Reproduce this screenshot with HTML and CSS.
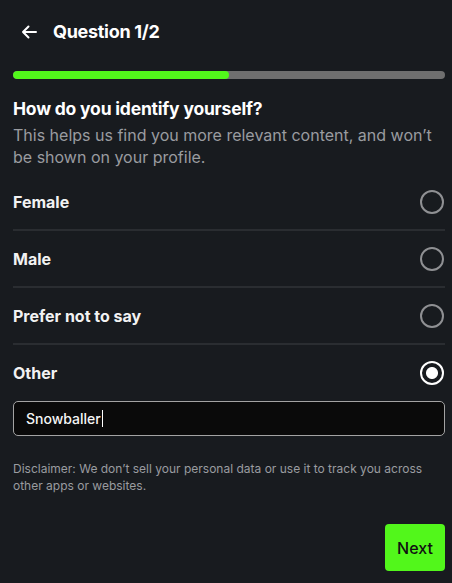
FILE: index.html
```html
<!DOCTYPE html>
<html>
<head>
<meta charset="utf-8">
<link rel="stylesheet" href="styles.css">
</head>
<body>
<div class="page">
  <header class="topbar">
    <svg class="back" width="16" height="14" viewBox="0 0 16 14"><path d="M15 7H2M7.5 1.5L2 7l5.5 5.5" fill="none" stroke="#fff" stroke-width="2" stroke-linecap="round" stroke-linejoin="round"/></svg>
    <h1 class="topbar-title">Question 1/2</h1>
  </header>
  <div class="progress"><div class="progress-fill" style="width:50%"></div></div>
  <h2 class="question">How do you identify yourself?</h2>
  <p class="hint">This helps us find you more relevant content, and won’t be shown on your profile.</p>
  <ul class="options">
    <li class="option"><span>Female</span><span class="radio"></span></li>
    <li class="option"><span>Male</span><span class="radio"></span></li>
    <li class="option"><span>Prefer not to say</span><span class="radio"></span></li>
    <li class="option last"><span>Other</span><span class="radio checked"></span></li>
  </ul>
  <div class="input"><span>Snowballer</span><span class="caret"></span></div>
  <p class="disclaimer">Disclaimer: We don’t sell your personal data or use it to track you across other apps or websites.</p>
  <div class="actions"><button class="next">Next</button></div>
</div>
</body>
</html>
```
FILE: styles.css
```css
* { box-sizing: border-box; }
html, body { margin: 0; padding: 0; }
body {
  background: #181b1f;
  color: #fff;
  font-family: Inter, "Noto Sans", sans-serif;
  width: 452px;
  height: 583px;
  overflow: hidden;
}
.page { padding: 0 7px 0 13px; display: flex; flex-direction: column; }
.topbar { height: 63px; display: flex; align-items: center; gap: 16px; padding-left: 8px; }
.back { display: block; }
.topbar-title { margin: 0; font-size: 18px; font-weight: 700; letter-spacing: -0.3px; }
.progress { height: 8px; background: #6f6f6f; border-radius: 4px; margin-top: 8px; overflow: hidden; }
.progress-fill { height: 100%; background: #52f71b; border-radius: 4px; }
.question { margin: 19px 0 0; font-size: 17.5px; font-weight: 700; line-height: 22px; letter-spacing: -0.2px; }
.hint { margin: 4px 0 0; font-size: 16px; line-height: 22px; color: #9a9ca0; }
.options { list-style: none; margin: 6px 0 0; padding: 0; }
.option {
  height: 57px;
  display: flex; align-items: center; justify-content: space-between;
  border-bottom: 2px solid #2a2d31;
  font-size: 16px; font-weight: 700;
  color: #f2f2f2;
  padding-right: 1px;
}
.option.last { border-bottom: none; height: 56px; }
.radio { width: 24px; height: 24px; border-radius: 50%; border: 2px solid #8f9093; display: block; }
.radio.checked { border-color: #fff; background: radial-gradient(circle, #fff 0 5.5px, transparent 6.5px); }
.input {
  margin-top: 0;
  height: 35px;
  border: 1.5px solid #a3a3a3;
  border-radius: 5px;
  background: #0a0a0a;
  display: flex; align-items: center;
  padding-left: 12px;
  font-size: 14px; font-weight: 500; color: #f5f5f5;
}
.caret { width: 1px; height: 17px; background: #fff; margin-left: 1px; }
.disclaimer { margin: 24px 0 0; font-size: 12px; line-height: 17px; color: #9a9ca0; }
.actions { display: flex; justify-content: flex-end; margin-top: 30px; }
.next {
  width: 60px; height: 47px; border: none; border-radius: 4px;
  background: #52f71b; color: #111;
  font-family: Inter, sans-serif; font-size: 16px; font-weight: 500;
  padding: 0;
}
```
